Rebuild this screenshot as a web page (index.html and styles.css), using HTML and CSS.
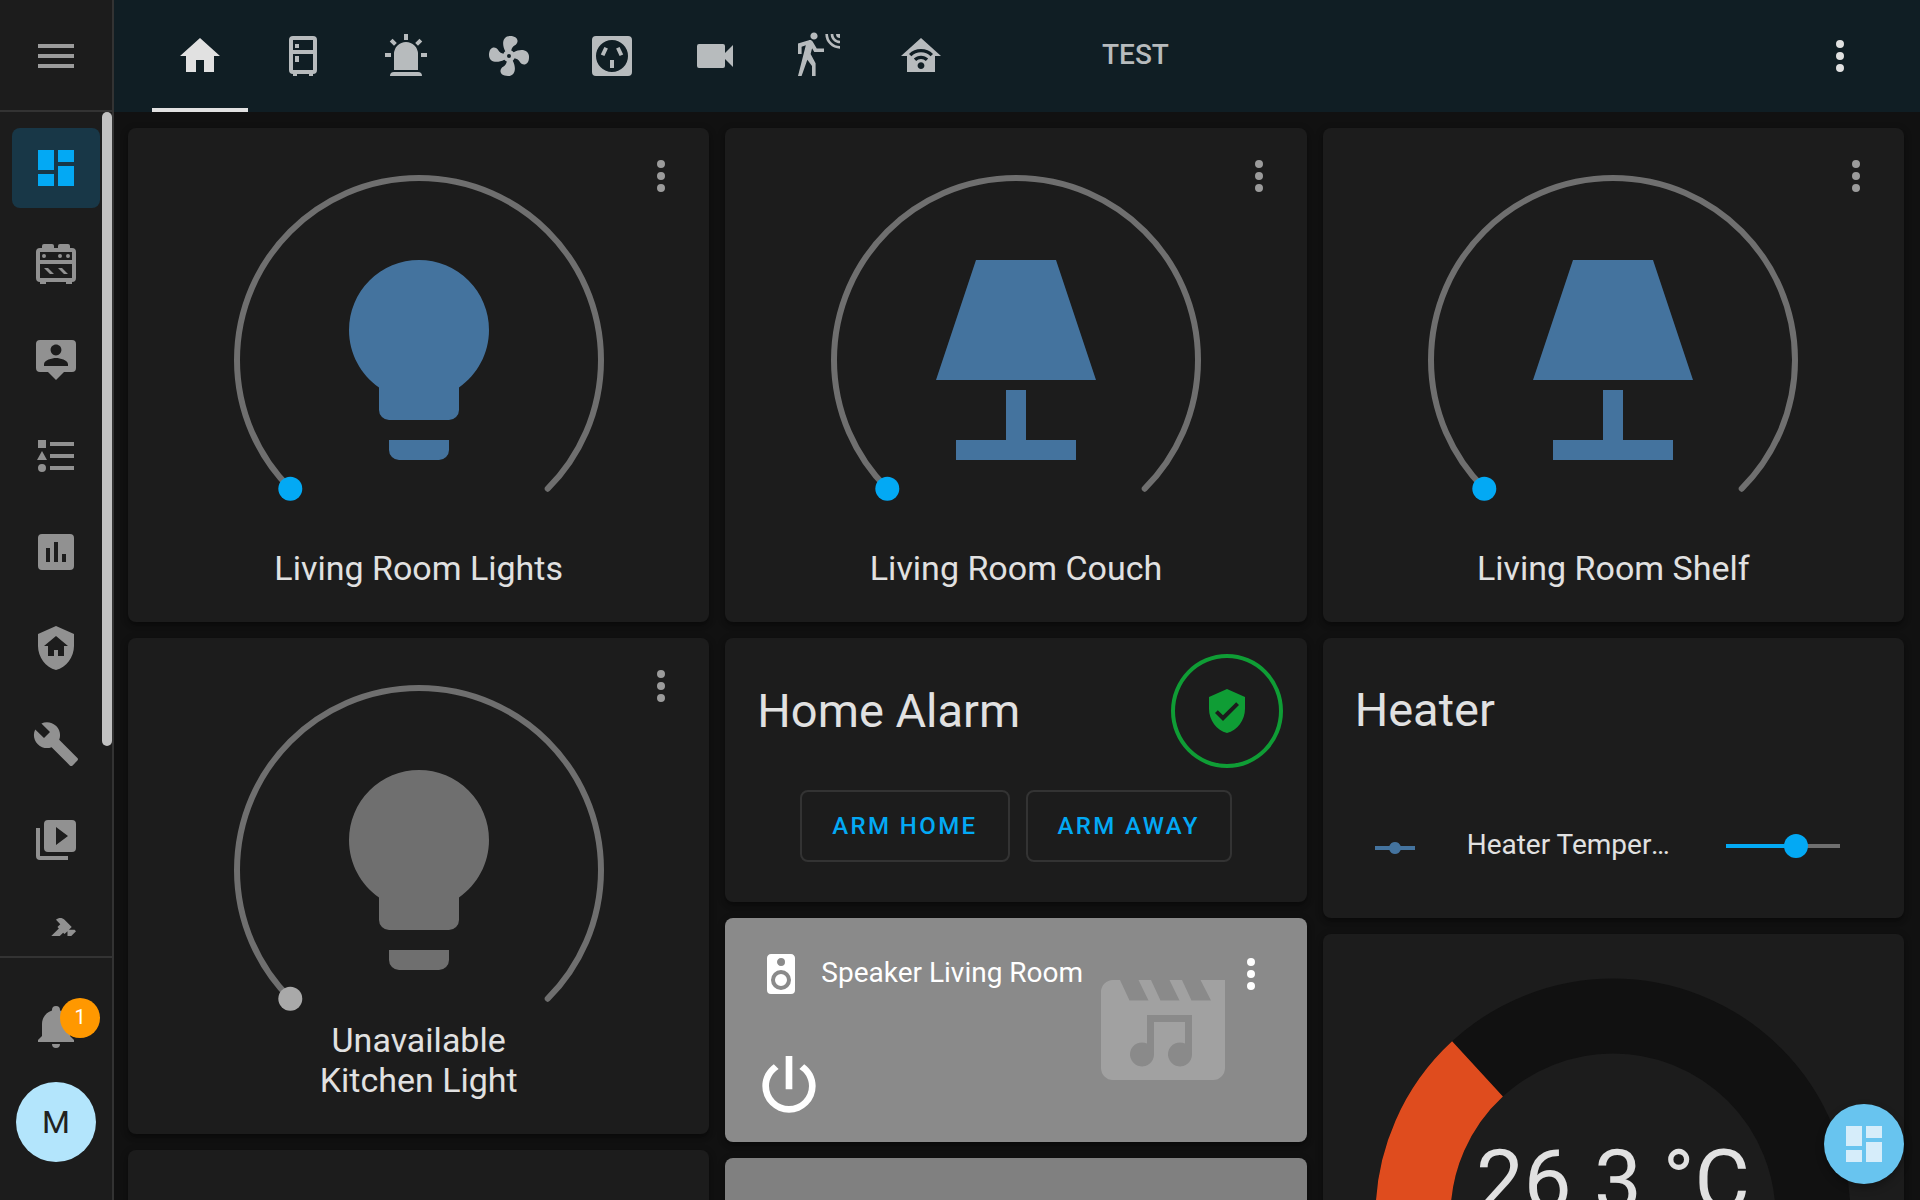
FILE: index.html
```html
<!DOCTYPE html>
<html lang="en">
<head>
<meta charset="utf-8">
<title>Home</title>
<link rel="stylesheet" href="styles.css">
</head>
<body>
<svg class="sprite" aria-hidden="true">
  <symbol id="menu" viewBox="0 0 24 24"><path d="M3,6H21V8H3V6M3,11H21V13H3V11M3,16H21V18H3V16Z"/></symbol>
  <symbol id="dots" viewBox="0 0 24 24"><path d="M12,16A2,2 0 0,1 14,18A2,2 0 0,1 12,20A2,2 0 0,1 10,18A2,2 0 0,1 12,16M12,10A2,2 0 0,1 14,12A2,2 0 0,1 12,14A2,2 0 0,1 10,12A2,2 0 0,1 12,10M12,4A2,2 0 0,1 14,6A2,2 0 0,1 12,8A2,2 0 0,1 10,6A2,2 0 0,1 12,4Z"/></symbol>
  <symbol id="dashboard" viewBox="0 0 24 24"><path d="M13,3V9H21V3M13,21H21V11H13M3,21H11V15H3M3,13H11V3H3V13Z"/></symbol>
  <symbol id="stove" viewBox="0 0 24 24"><path d="M6,14H8L11,17H9L6,14M4,4H5V3A1,1 0 0,1 6,2H10A1,1 0 0,1 11,3V4H13V3A1,1 0 0,1 14,2H18A1,1 0 0,1 19,3V4H20A2,2 0 0,1 22,6V19A2,2 0 0,1 20,21V22H17V21H7V22H4V21A2,2 0 0,1 2,19V6A2,2 0 0,1 4,4M18,7A1,1 0 0,1 19,8A1,1 0 0,1 18,9A1,1 0 0,1 17,8A1,1 0 0,1 18,7M14,7A1,1 0 0,1 15,8A1,1 0 0,1 14,9A1,1 0 0,1 13,8A1,1 0 0,1 14,7M20,6H4V10H20V6M4,19H20V12H4V19M6,7A1,1 0 0,1 7,8A1,1 0 0,1 6,9A1,1 0 0,1 5,8A1,1 0 0,1 6,7M13,14H15L18,17H16L13,14Z"/></symbol>
  <symbol id="person" viewBox="0 0 24 24"><path d="M20,2H4A2,2 0 0,0 2,4V16A2,2 0 0,0 4,18H8L12,22L16,18H20A2,2 0 0,0 22,16V4A2,2 0 0,0 20,2M12,4.3C13.5,4.3 14.7,5.5 14.7,7C14.7,8.5 13.5,9.7 12,9.7C10.5,9.7 9.3,8.5 9.3,7C9.3,5.5 10.5,4.3 12,4.3M18,15H6V14.1C6,12.1 10,11 12,11C14,11 18,12.1 18,14.1V15Z"/></symbol>
  <symbol id="list" viewBox="0 0 24 24"><path d="M5,9.5L7.5,14H2.5L5,9.5M3,4H7V8H3V4M5,20A2,2 0 0,0 7,18A2,2 0 0,0 5,16A2,2 0 0,0 3,18A2,2 0 0,0 5,20M9,5V7H21V5H9M9,19H21V17H9V19M9,13H21V11H9V13Z"/></symbol>
  <symbol id="chart" viewBox="0 0 24 24"><path d="M9,17H7V10H9V17M13,17H11V7H13V17M17,17H15V13H17V17M19,3H5A2,2 0 0,0 3,5V19A2,2 0 0,0 5,21H19A2,2 0 0,0 21,19V5A2,2 0 0,0 19,3Z"/></symbol>
  <symbol id="shield-home" viewBox="0 0 24 24"><path d="M11,13H13V16H16V11H18L12,6L6,11H8V16H11V13M12,1L21,5V11C21,16.55 17.16,21.74 12,23C6.84,21.74 3,16.55 3,11V5L12,1Z"/></symbol>
  <symbol id="wrench" viewBox="0 0 24 24"><path d="M22.7,19L13.6,9.9C14.5,7.6 14,4.9 12.1,3C10.1,1 7.1,0.6 4.7,1.7L9,6L6,9L1.6,4.7C0.4,7.1 0.9,10.1 2.9,12.1C4.8,14 7.5,14.5 9.8,13.6L18.9,22.7C19.3,23.1 19.9,23.1 20.3,22.7L22.6,20.4C23.1,20 23.1,19.3 22.7,19Z"/></symbol>
  <symbol id="play" viewBox="0 0 24 24"><path d="M4,6H2V20A2,2 0 0,0 4,22H18V20H4V6M20,2H8A2,2 0 0,0 6,4V16A2,2 0 0,0 8,18H20A2,2 0 0,0 22,16V4A2,2 0 0,0 20,2M12,14.5V5.5L18,10L12,14.5Z"/></symbol>
  <symbol id="hammer" viewBox="0 0 24 24"><path d="M2,19.63L13.43,8.2L12.72,7.5L14.14,6.07L12,3.89C13.2,2.7 15.09,2.7 16.27,3.89L19.87,7.5L18.45,8.91H21.29L22,9.62L18.45,13.21L17.74,12.5V9.62L16.27,11.04L15.56,10.33L4.13,21.76L2,19.63Z"/></symbol>
  <symbol id="bell" viewBox="0 0 24 24"><path d="M21,19V20H3V19L5,17V11C5,7.9 7.03,5.17 10,4.29C10,4.19 10,4.1 10,4A2,2 0 0,1 12,2A2,2 0 0,1 14,4C14,4.1 14,4.19 14,4.29C16.97,5.17 19,7.9 19,11V17L21,19M14,21A2,2 0 0,1 12,23A2,2 0 0,1 10,21"/></symbol>
  <symbol id="home" viewBox="0 0 24 24"><path d="M10,20V14H14V20H19V12H22L12,3L2,12H5V20H10Z"/></symbol>
  <symbol id="fridge" viewBox="0 0 24 24"><path d="M9,21V22H7V21A2,2 0 0,1 5,19V4A2,2 0 0,1 7,2H17A2,2 0 0,1 19,4V19A2,2 0 0,1 17,21V22H15V21H9M7,4V9H17V4H7M7,19H17V11H7V19M8,12H10V15H8V12M8,6H10V8H8V6Z"/></symbol>
  <symbol id="alarm" viewBox="0 0 24 24"><path d="M6,6.9L3.87,4.78L5.28,3.37L7.4,5.5L6,6.9M13,1V4H11V1H13M20.13,4.78L18,6.9L16.6,5.5L18.72,3.37L20.13,4.78M4.5,10.5V12.5H1.5V10.5H4.5M19.5,10.5H22.5V12.5H19.5V10.5M6,20H18A2,2 0 0,1 20,22H4A2,2 0 0,1 6,20M12,5A6,6 0 0,1 18,11V19H6V11A6,6 0 0,1 12,5Z"/></symbol>
  <symbol id="fan" viewBox="0 0 24 24"><path d="M12,11A1,1 0 0,0 11,12A1,1 0 0,0 12,13A1,1 0 0,0 13,12A1,1 0 0,0 12,11M12.5,2C17,2 17.11,5.57 14.75,6.75C13.76,7.24 13.32,8.29 13.13,9.22C13.61,9.42 14.03,9.73 14.35,10.13C18.05,8.13 22.03,8.92 22.03,12.5C22.03,17 18.46,17.1 17.28,14.73C16.78,13.74 15.72,13.3 14.79,13.11C14.59,13.59 14.28,14 13.88,14.34C15.87,18.03 15.08,22 11.5,22C7,22 6.91,18.42 9.27,17.24C10.25,16.75 10.69,15.71 10.89,14.79C10.4,14.59 9.97,14.27 9.65,13.87C5.96,15.85 2,15.07 2,11.5C2,7 5.56,6.89 6.74,9.26C7.24,10.25 8.29,10.68 9.22,10.87C9.41,10.39 9.73,9.97 10.14,9.65C8.15,5.96 8.94,2 12.5,2Z"/></symbol>
  <symbol id="socket" viewBox="0 0 24 24"><path fill-rule="evenodd" d="M4,2H20A2,2 0 0,1 22,4V20A2,2 0 0,1 20,22H4A2,2 0 0,1 2,20V4A2,2 0 0,1 4,2ZM12,4A8,8 0 1,0 12,20A8,8 0 1,0 12,4Z"/><path d="M11,14H13V18H11ZM8.2,7.5L9.95,8.3L8.2,12L6.4,11.2ZM15.8,7.5L14.05,8.3L15.8,12L17.6,11.2Z"/></symbol>
  <symbol id="video" viewBox="0 0 24 24"><path d="M17,10.5V7A1,1 0 0,0 16,6H4A1,1 0 0,0 3,7V17A1,1 0 0,0 4,18H16A1,1 0 0,0 17,17V13.5L21,17.5V6.5L17,10.5Z"/></symbol>
  <symbol id="motion" viewBox="0 0 24 24"><path d="M10,0.2C9,0.2 8.2,1 8.2,2C8.2,3 9,3.8 10,3.8C11,3.8 11.8,3 11.8,2C11.8,1 11,0.2 10,0.2M15.67,1A7.33,7.33 0 0,0 23,8.33V7A6,6 0 0,1 17,1H15.67M18.33,1C18.33,3.58 20.42,5.67 23,5.67V4.33C21.16,4.33 19.67,2.84 19.67,1H18.33M21,1A2,2 0 0,0 23,3V1H21M7.92,4.03C7.75,4.03 7.58,4.06 7.42,4.11L2,5.8V11H3.8V7.33L5.91,6.67L2,22H3.8L6.67,13.89L9,17V22H10.8V15.59L8.31,11.05L9.04,8.18L10.12,10H15V8.2H11.38L9.38,4.87C9.08,4.37 8.54,4.03 7.92,4.03Z"/></symbol>
  <symbol id="automation" viewBox="0 0 24 24"><path fill-rule="evenodd" d="M12,3L2,12H5V20H19V12H22L12,3M12,8.5C14.34,8.5 16.46,9.43 18,10.94L16.8,12.12C15.58,10.91 13.88,10.17 12,10.17C10.12,10.17 8.42,10.91 7.2,12.12L6,10.94C7.54,9.43 9.66,8.5 12,8.5M12,11.83C13.4,11.83 14.67,12.39 15.6,13.3L14.4,14.47C13.79,13.87 12.94,13.5 12,13.5C11.06,13.5 10.21,13.87 9.6,14.47L8.4,13.3C9.33,12.39 10.6,11.83 12,11.83M12,15.17C12.94,15.17 13.7,15.91 13.7,16.83C13.7,17.75 12.94,18.5 12,18.5C11.06,18.5 10.3,17.75 10.3,16.83C10.3,15.91 11.06,15.17 12,15.17Z"/></symbol>
  <symbol id="bulb" viewBox="0 0 24 24"><path d="M12,2A7,7 0 0,0 5,9C5,11.38 6.19,13.47 8,14.74V17A1,1 0 0,0 9,18H15A1,1 0 0,0 16,17V14.74C17.81,13.47 19,11.38 19,9A7,7 0 0,0 12,2M9,21A1,1 0 0,0 10,22H14A1,1 0 0,0 15,21V20H9V21Z"/></symbol>
  <symbol id="lamp" viewBox="0 0 24 24"><path d="M8,2H16L20,14H4L8,2M11,15H13V20H18V22H6V20H11V15Z"/></symbol>
  <symbol id="shield-check" viewBox="0 0 24 24"><path d="M10,17L6,13L7.41,11.59L10,14.17L16.59,7.58L18,9M12,1L3,5V11C3,16.55 6.84,21.74 12,23C17.16,21.74 21,16.55 21,11V5L12,1Z"/></symbol>
  <symbol id="speaker" viewBox="0 0 24 24"><path d="M12,12A3,3 0 0,0 9,15A3,3 0 0,0 12,18A3,3 0 0,0 15,15A3,3 0 0,0 12,12M12,20A5,5 0 0,1 7,15A5,5 0 0,1 12,10A5,5 0 0,1 17,15A5,5 0 0,1 12,20M12,4A2,2 0 0,1 14,6A2,2 0 0,1 12,8C10.89,8 10,7.1 10,6C10,4.89 10.89,4 12,4M17,2H7C5.89,2 5,2.89 5,4V20A2,2 0 0,0 7,22H17A2,2 0 0,0 19,20V4C19,2.89 18.1,2 17,2Z"/></symbol>
  <symbol id="power" viewBox="0 0 24 24"><path d="M16.56,5.44L15.11,6.89C16.84,7.94 18,9.83 18,12A6,6 0 0,1 12,18A6,6 0 0,1 6,12C6,9.83 7.16,7.94 8.88,6.88L7.44,5.44C5.36,6.88 4,9.28 4,12A8,8 0 0,0 12,20A8,8 0 0,0 20,12C20,9.28 18.64,6.88 16.56,5.44M13,3H11V13H13"/></symbol>
  <symbol id="vertex" viewBox="0 0 24 24"><path d="M2,11H9.17C9.58,9.83 10.69,9 12,9C13.31,9 14.42,9.83 14.83,11H22V13H14.83C14.42,14.17 13.31,15 12,15C10.69,15 9.58,14.17 9.17,13H2V11Z"/></symbol>
</svg>

<div class="app">
  <aside class="sidebar">
    <div class="sidebar-head"><button class="icon-button" aria-label="Menu"><svg class="icon"><use href="#menu"/></svg></button></div>
    <nav class="sidebar-nav">
      <a class="nav-item active" href="#overview" aria-label="Overview"><svg class="icon"><use href="#dashboard"/></svg></a>
      <a class="nav-item" href="#kitchen" aria-label="Kitchen"><svg class="icon"><use href="#stove"/></svg></a>
      <a class="nav-item" href="#map" aria-label="Map"><svg class="icon"><use href="#person"/></svg></a>
      <a class="nav-item" href="#logbook" aria-label="Logbook"><svg class="icon"><use href="#list"/></svg></a>
      <a class="nav-item" href="#history" aria-label="History"><svg class="icon"><use href="#chart"/></svg></a>
      <a class="nav-item" href="#security" aria-label="Security"><svg class="icon"><use href="#shield-home"/></svg></a>
      <a class="nav-item" href="#config" aria-label="Configuration"><svg class="icon"><use href="#wrench"/></svg></a>
      <a class="nav-item" href="#media" aria-label="Media"><svg class="icon"><use href="#play"/></svg></a>
      <a class="nav-item" href="#tools" aria-label="Developer tools"><svg class="icon"><use href="#hammer"/></svg></a>
      <span class="scroll-thumb"></span>
    </nav>
    <div class="sidebar-foot">
      <button class="nav-item bell" aria-label="Notifications"><svg class="icon"><use href="#bell"/></svg><span class="badge">1</span></button>
      <a class="avatar" href="#profile">M</a>
    </div>
  </aside>

  <div class="main">
    <header class="topbar">
      <nav class="tabs">
        <a class="tab current" href="#home" aria-label="Home"><svg class="icon"><use href="#home"/></svg></a>
        <a class="tab" href="#fridge" aria-label="Fridge"><svg class="icon"><use href="#fridge"/></svg></a>
        <a class="tab" href="#alarm" aria-label="Alarm"><svg class="icon"><use href="#alarm"/></svg></a>
        <a class="tab" href="#fan" aria-label="Fan"><svg class="icon"><use href="#fan"/></svg></a>
        <a class="tab" href="#socket" aria-label="Sockets"><svg class="icon"><use href="#socket"/></svg></a>
        <a class="tab" href="#video" aria-label="Cameras"><svg class="icon"><use href="#video"/></svg></a>
        <a class="tab" href="#motion" aria-label="Motion"><svg class="icon"><use href="#motion"/></svg></a>
        <a class="tab" href="#automation" aria-label="Automation"><svg class="icon"><use href="#automation"/></svg></a>
        <a class="tab tab-text" href="#test">TEST</a>
      </nav>
      <button class="icon-button" aria-label="More options"><svg class="icon"><use href="#dots"/></svg></button>
    </header>

    <main class="board">
      <div class="column">
        <section class="card light">
          <button class="icon-button more" aria-label="More"><svg class="icon"><use href="#dots"/></svg></button>
          <svg class="dial" viewBox="0 0 400 380"><path class="arc" d="M71.3,360.7A182,182 0 1,1 328.7,360.7"/><circle class="knob" cx="71.3" cy="360.7" r="12"/><use href="#bulb" x="80" y="112" width="240" height="240"/></svg>
          <div class="name">Living Room Lights</div>
        </section>
        <section class="card light unavailable">
          <button class="icon-button more" aria-label="More"><svg class="icon"><use href="#dots"/></svg></button>
          <svg class="dial" viewBox="0 0 400 380"><path class="arc" d="M71.3,360.7A182,182 0 1,1 328.7,360.7"/><circle class="knob" cx="71.3" cy="360.7" r="12"/><use href="#bulb" x="80" y="112" width="240" height="240"/></svg>
          <div class="name">Unavailable<br>Kitchen Light</div>
        </section>
        <section class="card light"></section>
      </div>

      <div class="column">
        <section class="card light">
          <button class="icon-button more" aria-label="More"><svg class="icon"><use href="#dots"/></svg></button>
          <svg class="dial" viewBox="0 0 400 380"><path class="arc" d="M71.3,360.7A182,182 0 1,1 328.7,360.7"/><circle class="knob" cx="71.3" cy="360.7" r="12"/><use href="#lamp" x="80" y="112" width="240" height="240"/></svg>
          <div class="name">Living Room Couch</div>
        </section>
        <section class="card alarm">
          <div class="alarm-head">
            <h2 class="title">Home Alarm</h2>
            <span class="alarm-state"><svg class="icon"><use href="#shield-check"/></svg></span>
          </div>
          <div class="actions">
            <button class="action">ARM HOME</button>
            <button class="action">ARM AWAY</button>
          </div>
        </section>
        <section class="card media">
          <svg class="artwork" viewBox="0 0 124 100"><path fill-rule="evenodd" d="M12,0H19L28.5,20.5H47.5L37.5,0H50L59.5,20.5H78.5L68.5,0H81L90.5,20.5H110L99.5,0H124V88A12,12 0 0 1 112,100H12A12,12 0 0 1 0,88V12A12,12 0 0 1 12,0ZM46,35V63.5A12,12 0 1 0 53,74.5V42H84V63.5A12,12 0 1 0 91,74.5V35Z"/></svg>
          <div class="media-head">
            <svg class="icon"><use href="#speaker"/></svg>
            <span class="media-name">Speaker Living Room</span>
            <button class="icon-button" aria-label="More"><svg class="icon"><use href="#dots"/></svg></button>
          </div>
          <button class="power" aria-label="Turn on"><svg class="power-icon"><use href="#power"/></svg></button>
        </section>
        <section class="card media idle"></section>
      </div>

      <div class="column">
        <section class="card light">
          <button class="icon-button more" aria-label="More"><svg class="icon"><use href="#dots"/></svg></button>
          <svg class="dial" viewBox="0 0 400 380"><path class="arc" d="M71.3,360.7A182,182 0 1,1 328.7,360.7"/><circle class="knob" cx="71.3" cy="360.7" r="12"/><use href="#lamp" x="80" y="112" width="240" height="240"/></svg>
          <div class="name">Living Room Shelf</div>
        </section>
        <section class="card heater">
          <h2 class="title">Heater</h2>
          <div class="row">
            <span class="row-icon"><svg class="icon"><use href="#vertex"/></svg></span>
            <label class="row-label" for="heater-temp">Heater Temperature</label>
            <input class="slider" id="heater-temp" type="range" min="0" max="100" value="64">
          </div>
        </section>
        <section class="card gauge">
          <svg class="gauge-dial" viewBox="0 0 500 250">
            <path class="gauge-track" d="M50,250A200,200 0 0 1 450,250"/>
            <path class="gauge-value" d="M50,250A200,200 0 0 1 114.5,102.9"/>
            <text class="gauge-text" x="250" y="244">26.3 °C</text>
          </svg>
        </section>
      </div>
    </main>
  </div>
  <button class="fab" aria-label="Edit dashboard"><svg class="icon"><use href="#dashboard"/></svg></button>
</div>
</body>
</html>
```
FILE: styles.css
```css
*, *::before, *::after { box-sizing: border-box; }

body {
  margin: 0;
  background: #111;
  color: #e1e1e1;
  font-family: Roboto, "Liberation Sans", sans-serif;
  font-size: 28px;
}

button {
  padding: 0;
  border: 0;
  background: none;
  color: inherit;
  font: inherit;
  cursor: pointer;
}

a { color: inherit; text-decoration: none; }

.sprite { position: absolute; width: 0; height: 0; }

.icon { display: block; width: 48px; height: 48px; fill: currentColor; flex: none; }

.icon-button {
  display: grid;
  place-items: center;
  width: 96px;
  height: 96px;
  flex: none;
}

.app { display: flex; height: 100vh; overflow: hidden; }

/* Sidebar */
.sidebar {
  display: flex;
  flex-direction: column;
  width: 114px;
  flex: none;
  background: #1c1c1c;
  border-right: 2px solid #333;
  color: #919191;
}

.sidebar-head {
  display: grid;
  place-items: center;
  height: 112px;
  padding-top: 2px;
  flex: none;
  border-bottom: 2px solid #333;
  color: #9b9b9b;
}

.sidebar-nav {
  position: relative;
  display: flex;
  flex-direction: column;
  gap: 16px;
  flex: 1;
  min-height: 0;
  padding: 16px 12px 0;
  overflow: hidden;
}

.nav-item {
  display: grid;
  place-items: center;
  width: 88px;
  height: 80px;
  flex: none;
  border-radius: 8px;
}

.nav-item.active { background: #183747; color: #03a9f4; }

.scroll-thumb {
  position: absolute;
  top: 0;
  right: 0;
  width: 10px;
  height: 77%;
  border-radius: 5px;
  background: #c1c1c1;
}

.sidebar-foot {
  display: flex;
  flex-direction: column;
  align-items: center;
  gap: 16px;
  margin-top: 20px;
  padding: 28px 0 38px;
  border-top: 2px solid #333;
}

.bell { position: relative; }

.badge {
  position: absolute;
  top: 12px;
  right: 0;
  width: 40px;
  height: 40px;
  border-radius: 50%;
  background: #ff9800;
  color: #fff;
  font-size: 20px;
  line-height: 38px;
  text-align: center;
}

.avatar {
  width: 80px;
  height: 80px;
  border-radius: 50%;
  background: #b3e5fc;
  color: #212121;
  font-size: 32px;
  line-height: 80px;
  text-align: center;
}

/* Top bar */
.main { flex: 1; min-width: 0; }

.topbar {
  display: flex;
  align-items: center;
  justify-content: space-between;
  height: 112px;
  padding: 0 32px 0 38px;
  background: #101e24;
}

.tabs { display: flex; gap: 7px; height: 100%; }

.tab {
  display: flex;
  align-items: center;
  padding: 4px 24px 0;
  border-bottom: 4px solid transparent;
  color: #b7bbbd;
}

.tab.current { border-color: #e1e1e1; color: #e1e1e1; }

.tab-text { margin-left: 102px; padding-top: 0; font-weight: 500; }

/* Cards */
.board {
  display: grid;
  grid-template-columns: repeat(3, minmax(0, 1fr));
  gap: 16px;
  padding: 16px 16px 16px 14px;
}

.column { display: flex; flex-direction: column; gap: 16px; }

.card {
  position: relative;
  border-radius: 8px;
  background: #1c1c1c;
  box-shadow: 0 4px 4px rgba(0, 0, 0, .25), 0 2px 8px rgba(0, 0, 0, .2);
}

.title {
  margin: 0;
  font-size: 47px;
  font-weight: 400;
  line-height: 64px;
}

.light {
  display: flex;
  flex-direction: column;
  align-items: center;
  min-height: 494px;
}

.more { position: absolute; top: 0; right: 0; color: #9b9b9b; }

.dial { width: 400px; max-width: 100%; fill: #44739e; }
.arc { fill: none; stroke: #6f6f6f; stroke-width: 6; stroke-linecap: round; }
.knob { fill: #03a9f4; }
.unavailable { min-height: 496px; }
.unavailable .dial { fill: #6f6f6f; }
.unavailable .knob { fill: #a9a9a9; }

.name {
  margin-top: auto;
  padding-bottom: 34px;
  font-size: 34px;
  line-height: 40px;
  text-align: center;
}

.alarm { padding: 16px 24px 40px 32px; }

.alarm-head {
  display: flex;
  align-items: center;
  justify-content: space-between;
}

.alarm-state {
  display: grid;
  place-items: center;
  width: 112px;
  height: 114px;
  border: 4px solid #0f9d35;
  border-radius: 50%;
  color: #0f9d35;
}

.actions { display: flex; justify-content: center; gap: 16px; padding: 22px 8px 0 0; }

.action {
  height: 72px;
  padding: 0 30px;
  border: 2px solid #333;
  border-radius: 8px;
  color: #03a9f4;
  font-size: 24px;
  font-weight: 500;
  letter-spacing: .1em;
}

.media {
  padding: 8px 8px 16px 32px;
  background: #8a8a8a;
  color: #fff;
}

.media.idle { height: 224px; background: #808080; }

.media-head { display: flex; align-items: center; gap: 16px; }
.media-name { flex: 1; padding-bottom: 4px; }

.artwork {
  position: absolute;
  top: 62px;
  right: 82px;
  width: 124px;
  height: 100px;
  fill: #a1a1a1;
}

.power { display: block; margin: 24px 0 0 -8px; }
.power-icon { display: block; width: 80px; height: 80px; fill: currentColor; }

.heater { padding: 40px 64px 32px 32px; }

.row {
  display: flex;
  align-items: center;
  height: 80px;
  margin-top: 64px;
}

.row-icon {
  display: grid;
  place-items: center;
  width: 80px;
  height: 80px;
  margin-right: 32px;
  padding-top: 4px;
  flex: none;
  color: #44739e;
}

.row-label {
  flex: 1;
  min-width: 0;
  margin-right: 56px;
  padding-bottom: 4px;
  overflow: hidden;
  text-overflow: ellipsis;
  white-space: nowrap;
}

.slider {
  width: 114px;
  height: 24px;
  margin: 0;
  flex: none;
  appearance: none;
  background: linear-gradient(90deg, #03a9f4 62%, #6f6f6f 62%) center / 100% 4px no-repeat;
}

.slider::-webkit-slider-thumb {
  appearance: none;
  width: 24px;
  height: 24px;
  border-radius: 50%;
  background: #03a9f4;
}

.gauge { padding: 32px 32px 96px; }
.gauge-dial { display: block; width: 100%; max-width: 500px; margin: 0 auto; overflow: visible; }
.gauge-track { fill: none; stroke: #111; stroke-width: 75; }
.gauge-value { fill: none; stroke: #df4c1e; stroke-width: 75; }
.gauge-text { fill: #e1e1e1; font-size: 85px; text-anchor: middle; }

.fab {
  position: fixed;
  right: 16px;
  bottom: 16px;
  display: grid;
  place-items: center;
  width: 80px;
  height: 80px;
  border-radius: 50%;
  background: #68c4ef;
  color: #d6edfa;
  box-shadow: 0 4px 8px rgba(0, 0, 0, .3);
}
```
